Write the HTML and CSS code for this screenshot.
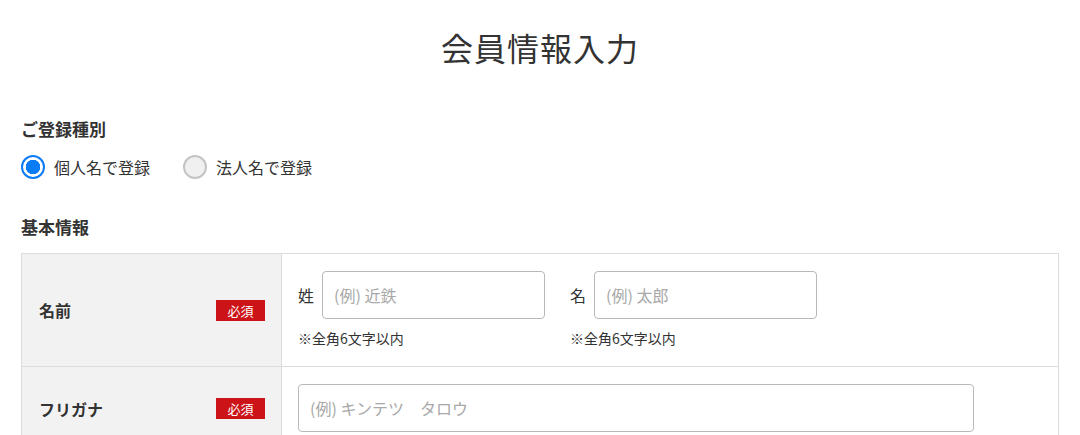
FILE: index.html
```html
<!DOCTYPE html>
<html lang="ja">
<head>
    <meta charset="UTF-8">
    <meta name="viewport" content="width=device-width, initial-scale=1.0">
    <title>会員情報入力</title>
    <link rel="stylesheet" href="styles.css">
</head>
<body>
    <div class="page">
        <h1 class="page-title">会員情報入力</h1>

        <h2 class="section-title">ご登録種別</h2>
        <div class="radio-group">
            <label class="radio">
                <input type="radio" name="type" checked>
                <span class="radio-mark"></span>
                <span>個人名で登録</span>
            </label>
            <label class="radio">
                <input type="radio" name="type">
                <span class="radio-mark"></span>
                <span>法人名で登録</span>
            </label>
        </div>

        <h2 class="section-title basic">基本情報</h2>
        <div class="form-table">
            <div class="form-row">
                <div class="form-label">
                    <span>名前</span>
                    <span class="required">必須</span>
                </div>
                <div class="form-field">
                    <div class="name-fields">
                        <div class="name-item">
                            <div class="name-line">
                                <span class="name-prefix">姓</span>
                                <input type="text" class="text-input short" placeholder="(例) 近鉄">
                            </div>
                            <p class="note">※全角6文字以内</p>
                        </div>
                        <div class="name-item">
                            <div class="name-line">
                                <span class="name-prefix">名</span>
                                <input type="text" class="text-input short" placeholder="(例) 太郎">
                            </div>
                            <p class="note">※全角6文字以内</p>
                        </div>
                    </div>
                </div>
            </div>
            <div class="form-row">
                <div class="form-label">
                    <span>フリガナ</span>
                    <span class="required">必須</span>
                </div>
                <div class="form-field">
                    <input type="text" class="text-input long" placeholder="(例) キンテツ　タロウ">
                </div>
            </div>
        </div>
    </div>
</body>
</html>
```

FILE: styles.css
```css
body {
    font-family: "Noto Sans CJK JP", "Noto Sans", sans-serif;
    color: #333;
    background-color: #fff;
    margin: 0;
    padding: 0;
}

.page {
    padding: 0 21px;
}

.page-title {
    text-align: center;
    font-size: 32px;
    font-weight: 400;
    letter-spacing: 1px;
    margin: 0;
    padding-top: 24px;
    line-height: 46px;
}

.section-title {
    font-size: 17px;
    font-weight: 700;
    margin: 47px 0 0;
    line-height: 24px;
}

.section-title.basic {
    margin-top: 36px;
}

.radio-group {
    display: flex;
    gap: 33px;
    margin-top: 14px;
}

.radio {
    display: flex;
    align-items: center;
    gap: 9px;
    font-size: 16px;
    line-height: 24px;
    cursor: pointer;
}

.radio input {
    display: none;
}

.radio-mark {
    width: 20px;
    height: 20px;
    border-radius: 50%;
    border: 2px solid #c4c4c4;
    background-color: #f0f0f0;
}

.radio input:checked + .radio-mark {
    border-color: #0a7cf5;
    background-color: #fff;
    background-image: radial-gradient(circle, #0a7cf5 0 7px, transparent 7.5px);
}

.form-table {
    margin-top: 14px;
    border: 1px solid #dcdcdc;
    border-bottom: none;
}

.form-row {
    display: flex;
    border-bottom: 1px solid #dcdcdc;
}

.form-label {
    width: 226px;
    flex-shrink: 0;
    display: flex;
    align-items: center;
    justify-content: space-between;
    padding: 0 16px 0 17px;
    background-color: #f2f2f2;
    border-right: 1px solid #dcdcdc;
    font-size: 16px;
    font-weight: 700;
}

.required {
    background-color: #cc1418;
    color: #fff;
    font-size: 13px;
    font-weight: 400;
    width: 49px;
    height: 21px;
    line-height: 21px;
    text-align: center;
}

.form-field {
    flex: 1;
    padding: 17px 16px 18px;
}

.name-fields {
    display: flex;
    gap: 25px;
}

.name-line {
    display: flex;
    align-items: center;
    gap: 8px;
    font-size: 16px;
}

.text-input {
    box-sizing: border-box;
    height: 48px;
    border: 1px solid #b8b8b8;
    border-radius: 4px;
    padding: 0 11px;
    font-family: inherit;
    font-size: 16px;
    color: #333;
}

.text-input::placeholder {
    color: #a8a8a8;
}

.text-input.short {
    width: 223px;
}

.text-input.long {
    width: 676px;
}

.note {
    margin: 9px 0 0;
    font-size: 14px;
    line-height: 20px;
}
```
